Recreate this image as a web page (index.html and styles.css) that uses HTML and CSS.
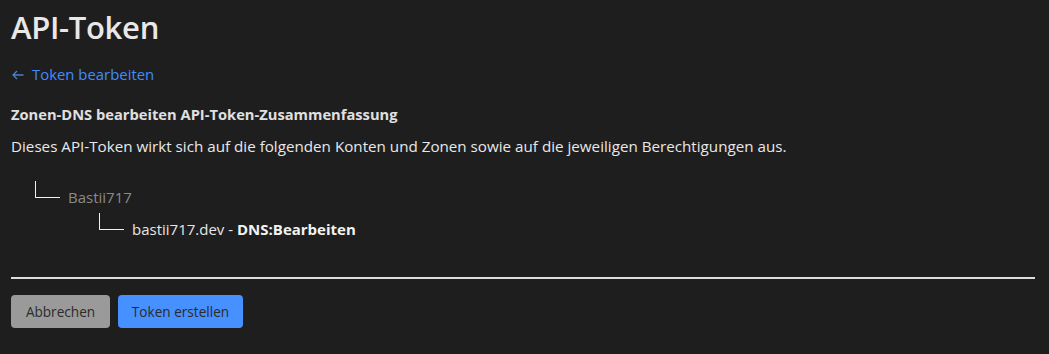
FILE: index.html
```html
<!DOCTYPE html>
<html lang="de">
<head>
  <meta charset="UTF-8">
  <meta name="viewport" content="width=device-width, initial-scale=1.0">
  <title>API-Token</title>
  <link rel="stylesheet" href="styles.css">
</head>
<body>
  <div class="page">
    <h1 class="title">API-Token</h1>
    <a class="back" href="#">
      <svg class="arrow" width="12" height="10" viewBox="0 0 12 10"><path d="M11.5 5H1M5 1L1 5l4 4" fill="none" stroke="#4a7fd0" stroke-width="1.3"/></svg>
      Token bearbeiten
    </a>

    <h2 class="summary-title">Zonen-DNS bearbeiten API-Token-Zusammenfassung</h2>
    <p class="summary-text">Dieses API-Token wirkt sich auf die folgenden Konten und Zonen sowie auf die jeweiligen Berechtigungen aus.</p>

    <ul class="tree">
      <li class="tree-item account">
        <span class="branch"></span>
        <span class="label">Bastii717</span>
      </li>
      <li class="tree-item zone">
        <span class="branch"></span>
        <span class="label">bastii717.dev - <b>DNS:Bearbeiten</b></span>
      </li>
    </ul>

    <hr class="divider">

    <div class="actions">
      <button class="btn btn-cancel">Abbrechen</button>
      <button class="btn btn-primary">Token erstellen</button>
    </div>
  </div>
</body>
</html>
```

FILE: styles.css
```css
* { margin: 0; padding: 0; box-sizing: border-box; }
html, body { background: #1e1e1e; }
body { font-family: "Open Sans", "Noto Sans", sans-serif; color: #e6e6e6; font-size: 15px; }

.page { padding: 5px 14px 0 11px; }

.title { font-size: 31px; font-weight: 600; color: #e8e8e8; line-height: 44px; letter-spacing: -0.3px; }

.back { display: inline-flex; align-items: center; gap: 8px; margin-top: 15px; color: #3f8cff; text-decoration: none; font-size: 14.9px; line-height: 20px; }
.back .arrow { margin-left: 1px; margin-top: 2px; }

.summary-title { margin-top: 20px; font-size: 14.7px; font-weight: 700; color: #e0e0e0; line-height: 20px; }
.summary-text { margin-top: 12px; font-size: 15.2px; line-height: 20px; color: #e8e8e8; }

.tree { list-style: none; margin-top: 26px; }
.tree-item { display: flex; align-items: flex-end; height: 16px; margin-top: 16px; }
.tree-item:first-child { margin-top: 0; }
.tree-item .branch { width: 25px; height: 17px; border-left: 1.5px solid #f0f0f0; border-bottom: 1.5px solid #f0f0f0; flex: none; }
.tree-item .label { margin-left: 8px; line-height: 20px; position: relative; top: 9px; }
.tree-item.account { margin-left: 24px; }
.tree-item.account .label { color: #8a8a8a; }
.tree-item.zone { margin-left: 88px; }
.tree-item.zone .label { color: #e6e6e6; }
.tree-item.zone b { font-weight: 700; color: #f2f2f2; }

.divider { margin-top: 47px; border: none; border-top: 2px solid #dcdcdc; }

.actions { display: flex; gap: 8px; margin-top: 16px; }
.btn { height: 33px; padding: 0; border: none; border-radius: 4px; font-family: inherit; font-size: 13.6px; color: #2b2b2b; cursor: pointer; white-space: nowrap; text-align: center; }
.btn-cancel { background: #9a9a9a; width: 99px; }
.btn-primary { background: #4690ff; width: 125px; }
```
